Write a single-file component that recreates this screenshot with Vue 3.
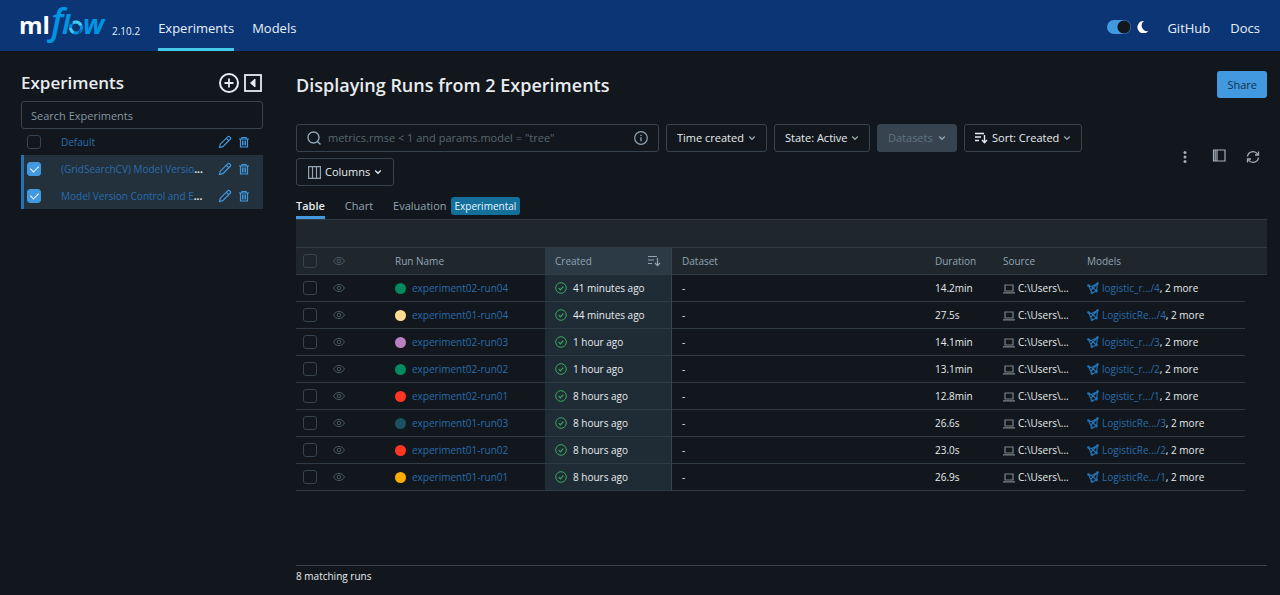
<script setup>
import { ref } from 'vue'

const darkMode = ref(true)
const query = ref('')
const search = ref('')

const experiments = ref([
  { name: 'Default', more: false, selected: false },
  { name: '(GridSearchCV) Model Versio', more: true, selected: true },
  { name: 'Model Version Control and E', more: true, selected: true },
])

const tint = {
  green: '#008a5e',
  sand: '#ffdc91',
  lilac: '#ba80c4',
  red: '#ff3621',
  teal: '#1b5162',
  amber: '#ffab00',
}

const runs = [
  { name: 'experiment02-run04', color: tint.green, created: '41 minutes ago', duration: '14.2min', model: 'logistic_r.../4' },
  { name: 'experiment01-run04', color: tint.sand, created: '44 minutes ago', duration: '27.5s', model: 'LogisticRe.../4' },
  { name: 'experiment02-run03', color: tint.lilac, created: '1 hour ago', duration: '14.1min', model: 'logistic_r.../3' },
  { name: 'experiment02-run02', color: tint.green, created: '1 hour ago', duration: '13.1min', model: 'logistic_r.../2' },
  { name: 'experiment02-run01', color: tint.red, created: '8 hours ago', duration: '12.8min', model: 'logistic_r.../1' },
  { name: 'experiment01-run03', color: tint.teal, created: '8 hours ago', duration: '26.6s', model: 'LogisticRe.../3' },
  { name: 'experiment01-run02', color: tint.red, created: '8 hours ago', duration: '23.0s', model: 'LogisticRe.../2' },
  { name: 'experiment01-run01', color: tint.amber, created: '8 hours ago', duration: '26.9s', model: 'LogisticRe.../1' },
]
</script>

<template>
  <div class="page">
    <header class="topbar">
      <a class="brand" href="#" aria-label="mlflow home">
        <svg class="logo" viewBox="0 0 90 40" width="90" height="40">
          <text class="logo-ml" x="-1" y="28">ml<tspan class="logo-f" x="31" y="28">f</tspan><tspan class="logo-low" x="42" y="28">l</tspan><tspan class="logo-low" x="63" y="28">w</tspan></text>
          <circle cx="56" cy="21.500" r="5.500" class="ring" />
          <path d="M53 16.800a5.500 5.500 0 0 1 8 2.700M50.500 22a5.500 5.500 0 0 0 3 4.500" class="ring light" />
          <path d="M58.500 28l2-4M51 18.500l1.500-3" class="gap" />
        </svg>
      </a>
      <span class="version">2.10.2</span>
      <nav class="nav">
        <a href="#" class="nav-link active">Experiments</a>
        <a href="#" class="nav-link">Models</a>
      </nav>
      <div class="top-right">
        <input v-model="darkMode" class="switch" type="checkbox" role="switch" aria-label="Dark mode" />
        <svg class="moon" viewBox="0 0 12 12" width="12" height="12"><path d="M7 0A6.200 6.200 0 1 0 11.500 10 5.600 5.600 0 0 1 7 0z" fill="#fff" /></svg>
        <a href="#" class="top-link">GitHub</a>
        <a href="#" class="top-link">Docs</a>
      </div>
    </header>

    <div class="body">
      <aside class="sidebar">
        <div class="side-head">
          <h2>Experiments</h2>
          <button type="button" class="icon-btn" aria-label="New experiment">
            <svg viewBox="0 0 20 20" width="20" height="20" class="stroke bright"><circle cx="10" cy="10" r="9" stroke-width="2" /><path d="M10 5.500v9M5.500 10h9" stroke-width="1.800" /></svg>
          </button>
          <button type="button" class="icon-btn" aria-label="Collapse sidebar">
            <svg viewBox="0 0 18 18" width="18" height="18" class="stroke bright"><rect x="1" y="1" width="16" height="16" stroke-width="1.800" /><path d="M11 5v8L6.500 9z" fill="#e8ecf0" stroke-width="1" /></svg>
          </button>
        </div>
        <input v-model="search" class="side-search" type="text" placeholder="Search Experiments" aria-label="Search experiments" />
        <ul class="exp-list">
          <li v-for="(e, i) in experiments" :key="i" :class="{ on: e.selected }">
            <input v-model="e.selected" type="checkbox" class="check" :aria-label="'Select ' + e.name" />
            <div class="exp-name"><a href="#">{{ e.name }}</a><b v-if="e.more">...</b></div>
            <button type="button" class="icon-btn" aria-label="Rename">
              <svg viewBox="0 0 14 14" width="14" height="14" class="stroke blue"><path d="M1.500 12.500l.8-3.300 7.400-7.400a1.500 1.500 0 0 1 2.200 0l.3.300a1.500 1.500 0 0 1 0 2.200l-7.400 7.400zM8.300 3.300l2.400 2.400" stroke-width="1.200" /></svg>
            </button>
            <button type="button" class="icon-btn" aria-label="Delete">
              <svg viewBox="0 0 12 12" width="12" height="12" class="stroke blue"><path d="M1 3h10M4 3V1.500h4V3M2.500 3v8h7V3" stroke-width="1.200" /><path d="M4.500 4.500v5M6 4.500v5M7.500 4.500v5" /></svg>
            </button>
          </li>
        </ul>
      </aside>

      <main class="main">
        <div class="title-row">
          <h1>Displaying Runs from 2 Experiments</h1>
          <button type="button" class="share">Share</button>
        </div>

        <div class="toolbar">
          <div class="filters">
            <div class="query">
              <svg viewBox="0 0 14 14" width="14" height="14" class="stroke gray"><circle cx="6.500" cy="6.500" r="5.500" stroke-width="1.400" /><path d="M10.500 10.500l3 3" stroke-width="1.400" /></svg>
              <input v-model="query" type="text" placeholder='metrics.rmse &lt; 1 and params.model = "tree"' aria-label="Filter runs" />
              <svg viewBox="0 0 14 14" width="14" height="14" class="stroke gray"><circle cx="7" cy="7" r="6.300" stroke-width="1.200" /><path d="M7 6.300v4M7 3.700v1.300" stroke-width="1.300" /></svg>
            </div>
            <div class="pick time">
              <select aria-label="Time created"><option>Time created</option></select>
              <svg viewBox="0 0 8 8" width="8" height="8" class="stroke gray"><path d="M1.200 2.500L4 5.300l2.800-2.800" stroke-width="1.300" /></svg>
            </div>
            <div class="pick state">
              <select aria-label="State"><option>State: Active</option></select>
              <svg viewBox="0 0 8 8" width="8" height="8" class="stroke gray"><path d="M1.200 2.500L4 5.300l2.800-2.800" stroke-width="1.300" /></svg>
            </div>
            <div class="pick datasets">
              <select disabled aria-label="Datasets"><option>Datasets</option></select>
              <svg viewBox="0 0 8 8" width="8" height="8" class="stroke gray"><path d="M1.200 2.500L4 5.300l2.800-2.800" stroke-width="1.300" /></svg>
            </div>
            <div class="pick sort">
              <svg viewBox="0 0 13 12" width="13" height="12" class="stroke bright lead"><path d="M0 1.500h9M0 5h6M0 8.500h4M9.500 3v7.500M7 8l2.500 2.700L12 8" stroke-width="1.400" /></svg>
              <select aria-label="Sort"><option>Sort: Created</option></select>
              <svg viewBox="0 0 8 8" width="8" height="8" class="stroke gray"><path d="M1.200 2.500L4 5.300l2.800-2.800" stroke-width="1.300" /></svg>
            </div>
            <button type="button" class="columns">
              <svg viewBox="0 0 13 13" width="13" height="13" class="stroke gray"><path d="M.6.600h11.800v11.800H.6zM4.500.6v11.800M8.500.6v11.800" stroke-width="1.200" /></svg>
              <span>Columns</span>
              <svg viewBox="0 0 8 8" width="8" height="8" class="stroke bright"><path d="M1.200 2.500L4 5.300l2.800-2.800" stroke-width="1.300" /></svg>
            </button>
          </div>
          <div class="tools">
            <button type="button" class="icon-btn" aria-label="More">
              <svg viewBox="0 0 16 16" width="16" height="16" fill="#a3adb6"><circle cx="8" cy="3.500" r="1.500" /><circle cx="8" cy="8" r="1.500" /><circle cx="8" cy="12.500" r="1.500" /></svg>
            </button>
            <button type="button" class="icon-btn" aria-label="Toggle side panel">
              <svg viewBox="0 0 16 16" width="16" height="16" class="stroke silver"><path d="M2.500 1h11.500v11H2.500zM6 1v11M4.200 1v11" stroke-width="1.200" /></svg>
            </button>
            <button type="button" class="icon-btn" aria-label="Refresh">
              <svg viewBox="0 0 16 16" width="16" height="16" class="stroke silver"><path d="M2.500 7.500a5.500 5.500 0 0 1 10-2.500M13.500 8.500a5.500 5.500 0 0 1-10 2.500M13.500 2.500v3.500H10M2.500 13.500V10H6" stroke-width="1.300" /></svg>
            </button>
          </div>
        </div>

        <div class="tabs" role="tablist">
          <button type="button" role="tab" aria-selected="true" class="tab active">Table</button>
          <button type="button" role="tab" aria-selected="false" class="tab">Chart</button>
          <button type="button" role="tab" aria-selected="false" class="tab">Evaluation<span class="tag">Experimental</span></button>
        </div>

        <table class="runs">
          <colgroup>
            <col class="c-check" /><col class="c-eye" /><col class="c-name" /><col class="c-created" /><col />
            <col class="c-duration" /><col class="c-source" /><col class="c-models" /><col class="c-end" />
          </colgroup>
          <thead>
            <tr class="group"><td colspan="9"></td></tr>
            <tr>
              <th class="box"><input type="checkbox" class="check" aria-label="Select all runs" /></th>
              <th class="eye">
                <svg viewBox="0 0 12 10" width="12" height="10" class="stroke dim"><path d="M.6 5C2.800.200 9.200.200 11.400 5 9.200 9.800 2.800 9.800.6 5z" /><circle cx="6" cy="5" r="1.800" /></svg>
              </th>
              <th>Run Name</th>
              <th class="created">
                <div class="sorted">
                  <span>Created</span>
                  <svg viewBox="0 0 13 12" width="13" height="12" class="stroke gray"><path d="M0 1.500h9M0 5h6M0 8.500h4M9.500 3v7.500M7 8l2.500 2.700L12 8" stroke-width="1.200" /></svg>
                </div>
              </th>
              <th>Dataset</th>
              <th>Duration</th>
              <th>Source</th>
              <th>Models</th>
              <th></th>
            </tr>
          </thead>
          <tbody>
            <tr v-for="run in runs" :key="run.name">
              <td class="box"><input type="checkbox" class="check" :aria-label="'Select ' + run.name" /></td>
              <td class="eye">
                <svg viewBox="0 0 12 10" width="12" height="10" class="stroke dim"><path d="M.6 5C2.800.200 9.200.200 11.400 5 9.200 9.800 2.800 9.800.6 5z" /><circle cx="6" cy="5" r="1.800" /></svg>
              </td>
              <td>
                <div class="cell"><i class="dot" :style="{ background: run.color }"></i><a href="#" class="run">{{ run.name }}</a></div>
              </td>
              <td class="created">
                <div class="cell">
                  <svg viewBox="0 0 12 12" width="12" height="12" class="stroke ok"><circle cx="6" cy="6" r="5.300" /><path d="M3.700 6.200l1.600 1.600 3-3.200" stroke-width="1.200" /></svg>
                  <span>{{ run.created }}</span>
                </div>
              </td>
              <td>-</td>
              <td>{{ run.duration }}</td>
              <td>
                <div class="cell source">
                  <svg viewBox="0 0 12 12" width="12" height="12" class="stroke laptop"><path d="M2 3h8v6H2zM0 10.800h12" stroke-width="1.200" /></svg>
                  <span>C:\Users\...</span>
                </div>
              </td>
              <td>
                <div class="cell source">
                  <svg viewBox="0 0 12 12" width="12" height="12" class="stroke model"><path d="M1.500 3.500L4.500 4.500 10.500 1.500 9.500 9 5 11zM4.500 4.500l5 4.500M10 2L4 8" stroke-width="1.200" /><circle cx="1.500" cy="3.500" r="1" /><circle cx="10.500" cy="1.500" r="1" /><circle cx="9.500" cy="9" r="1" /><circle cx="5" cy="10.800" r="1" /></svg>
                  <span><a href="#">{{ run.model }}</a>, 2 more</span>
                </div>
              </td>
              <td class="end"></td>
            </tr>
          </tbody>
        </table>

        <footer class="count">8 matching runs</footer>
      </main>
    </div>
  </div>
</template>

<style>
body {
  margin: 0;
  background: #11171c;
}
</style>

<style scoped>
* {
  box-sizing: border-box;
}
.page {
  min-height: 100vh;
  display: flex;
  flex-direction: column;
  background: #11171c;
  color: #e8ecf0;
  font-family: "Open Sans", "Noto Sans", sans-serif;
  font-size: 11px;
  line-height: 16px;
}
a {
  color: #2a6cac;
  text-decoration: none;
}
button,
input,
select {
  font: inherit;
  color: inherit;
  margin: 0;
}
svg {
  display: block;
  flex: none;
}
.stroke {
  fill: none;
  stroke-width: 1;
}
.bright { stroke: #e8ecf0; }
.gray { stroke: #92a4b3; }
.silver { stroke: #a3adb6; }
.dim { stroke: #4b5963; }
.blue { stroke: #4299e0; }
.ok { stroke: #3ba65e; }
.laptop { stroke: #7d858b; }
.model { stroke: #2272b4; }

.topbar {
  height: 51px;
  display: flex;
  align-items: stretch;
  padding: 0 20px;
  background: #0b3574;
}
.brand { padding-top: 6px; }
.logo { overflow: visible; }
.logo-ml {
  font: 700 24px "Open Sans", sans-serif;
  fill: #fff;
}
.logo-f {
  font: italic 600 36px "Open Sans", sans-serif;
  fill: #0194e2;
}
.logo-low {
  font: italic 700 27px "Open Sans", sans-serif;
  fill: #0194e2;
}
.ring {
  fill: none;
  stroke: #0194e2;
  stroke-width: 3;
}
.ring.light { stroke: #43c9ed; }
.gap {
  stroke: #0b3574;
  stroke-width: 1;
}
.version {
  padding-top: 23px;
  margin-left: 2px;
  font-size: 10px;
  color: #e0f0ff;
}
.nav {
  display: flex;
  gap: 18px;
  margin-left: 18px;
}
.nav-link,
.top-link {
  padding-top: 18px;
  font-size: 13px;
  line-height: 20px;
  color: #e7f1fb;
}
.nav-link.active { border-bottom: 3px solid #43c9ed; }
.top-right {
  margin-left: auto;
  display: flex;
}
.switch {
  appearance: none;
  width: 24px;
  height: 14px;
  margin-top: 20px;
  border-radius: 7px;
  background: radial-gradient(circle at 17px 7px, #11171c 6px, #4299e0 7px);
}
.moon {
  margin: 21px 18px 0 6px;
}
.top-link + .top-link { margin-left: 20px; }

.body {
  flex: 1;
  display: flex;
  gap: 33px;
  padding: 20px 13px 0 21px;
}
.sidebar {
  width: 242px;
  flex: none;
}
h1,
h2 {
  margin: 0;
  line-height: 26px;
  font-weight: 600;
}
h1 { font-size: 18px; }
h2 { font-size: 17px; }
.side-head {
  display: flex;
  align-items: center;
  gap: 5px;
  height: 24px;
  padding-right: 1px;
}
.side-head h2 { flex: 1; }
.icon-btn {
  padding: 0;
  border: 0;
  background: none;
}
.side-search {
  display: block;
  width: 100%;
  height: 28px;
  margin-top: 6px;
  padding: 0 9px;
  border: 1px solid #37444f;
  border-radius: 3px;
  background: transparent;
}
input::placeholder {
  color: #8796a2;
  opacity: 1;
}
.exp-list {
  list-style: none;
  margin: 0;
  padding: 0;
}
.exp-list li {
  display: flex;
  align-items: center;
  height: 27px;
  padding: 0 13px 0 3px;
  border-left: 3px solid transparent;
}
.exp-list li:first-child { height: 26px; }
.exp-list li.on {
  border-color: #2272b4;
  background: #22313c;
}
.exp-name {
  flex: 1;
  margin: 0 8px 0 20px;
  font-size: 10px;
  white-space: nowrap;
}
.exp-list .icon-btn + .icon-btn { margin-left: 6px; }
.check {
  appearance: none;
  display: block;
  flex: none;
  width: 14px;
  height: 14px;
  border: 1px solid #37444f;
  border-radius: 3px;
}
.check:checked {
  border-color: #4299e0;
  background: #4299e0;
}
.check:checked::after {
  content: "";
  display: block;
  width: 4px;
  height: 7px;
  margin: 1px auto 0;
  border: solid #fff;
  border-width: 0 1px 1px 0;
  transform: rotate(45deg);
}

.main {
  flex: 1;
  min-width: 0;
  display: flex;
  flex-direction: column;
}
.title-row {
  display: flex;
  align-items: center;
  justify-content: space-between;
  height: 27px;
}
.share {
  height: 27px;
  padding: 0 10px;
  border: 0;
  border-radius: 3px;
  background: #4299e0;
  color: #11304a;
}
.toolbar {
  display: flex;
  align-items: center;
  gap: 16px;
  margin-top: 26px;
  padding-right: 6px;
}
.filters {
  flex: 1;
  display: flex;
  flex-wrap: wrap;
  gap: 6px 7px;
}
.query,
.pick,
.columns {
  display: flex;
  align-items: center;
  height: 28px;
  border: 1px solid #37444f;
  border-radius: 3px;
  background: transparent;
}
.query {
  flex: 0 1 363px;
  padding: 0 10px;
  gap: 7px;
}
.query input {
  flex: 1;
  min-width: 0;
  padding: 0;
  border: 0;
  background: none;
}
.query input::placeholder { color: #5b6770; }
.pick { padding: 0 10px; }
.pick select {
  appearance: none;
  flex: 1;
  min-width: 0;
  padding: 0;
  border: 0;
  background: none;
}
.pick .lead { margin-right: 4px; }
.time { width: 101px; }
.state { width: 96px; }
.datasets {
  width: 80px;
  background: #37444f;
}
.datasets select {
  color: #5f7281;
  opacity: 1;
}
.sort { width: 118px; }
.columns {
  gap: 4px;
  width: 98px;
  padding: 0 11px;
}
.tools {
  display: flex;
  gap: 18px;
  padding-top: 3px;
}
.tabs {
  display: flex;
  gap: 20px;
  height: 33px;
}
.tab {
  display: flex;
  align-items: center;
  gap: 4px;
  padding: 10px 0 0;
  border: 0;
  border-bottom: 3px solid transparent;
  background: none;
  color: #92a4b3;
  white-space: nowrap;
}
.tab.active {
  border-color: #4299e0;
  color: #e8ecf0;
  font-weight: 600;
}
.tag {
  padding: 0 4px;
  border-radius: 3px;
  background: #14709b;
  color: #e6f6ff;
  font-size: 10px;
  line-height: 18px;
}

.runs {
  width: 100%;
  table-layout: fixed;
  border-collapse: separate;
  border-spacing: 0;
  font-size: 10px;
}
.c-check { width: 30px; }
.c-eye { width: 59px; }
.c-name { width: 160px; }
.c-created { width: 127px; }
.c-duration { width: 68px; }
.c-source { width: 84px; }
.c-models { width: 168px; }
.c-end { width: 22px; }
.runs th,
.runs td {
  height: 27px;
  padding: 0 10px;
  border-bottom: 1px solid #303b44;
  text-align: left;
  font-weight: 400;
  white-space: nowrap;
}
.runs th,
.runs .group td {
  background: #1f272d;
  color: #92a4b3;
}
.runs .group td {
  height: 29px;
  border-top: 1px solid #303b44;
}
.runs .box { padding: 0 0 0 7px; }
.runs .eye { padding: 0 7px; }
.runs .created {
  background: #1f2b35;
  border-right: 1px solid #37444f;
}
.runs th.created { background: #2c3a46; }
.runs .end { border-bottom: 0; }
.sorted {
  display: flex;
  align-items: center;
  justify-content: space-between;
}
.cell {
  display: flex;
  align-items: center;
  gap: 6px;
}
.cell.source { gap: 3px; }
.dot {
  width: 11px;
  height: 11px;
  border-radius: 50%;
}
.count {
  margin-top: auto;
  padding: 2px 0 11px;
  border-top: 1px solid #37444f;
  font-size: 10px;
}
</style>
